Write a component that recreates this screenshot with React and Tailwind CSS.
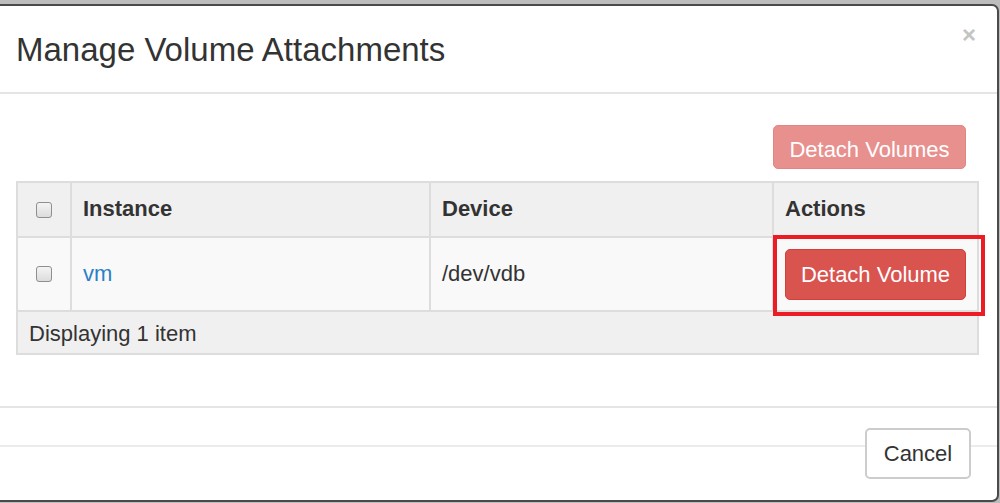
export default function App() {
  return (
    <div className="relative w-[1000px] h-[503px] bg-[#bdbdbd] overflow-hidden font-['Liberation_Sans',Arial,sans-serif] text-[#333]">
      <div className="mt-[4px] h-[498px] w-[999px] bg-white border-t-2 border-r-2 border-b-2 border-[#4a4a4a] rounded-tr-[7px] rounded-br-[7px] flex flex-col">
        {/* Header */}
        <div className="h-[88px] shrink-0 border-b-2 border-[#e5e5e5] flex items-start justify-between pl-[16px] pr-[21px]">
          <h4 className="mt-[24px] text-[33px] leading-[40px] text-[#333]">Manage Volume Attachments</h4>
          <span className="mt-[17px] text-[24px] leading-[24px] font-bold text-[#c4c4c4]">×</span>
        </div>

        {/* Body */}
        <div className="h-[312px] shrink-0 pl-[16px] pr-[20px] pt-[31px]">
          <div className="flex justify-end pr-[11px]">
            <button className="h-[44px] w-[193px] rounded-[5px] bg-[#e8908e] border border-[#e38583] text-white text-[22px] pt-[4px]">
              Detach Volumes
            </button>
          </div>
          <div className="mt-[12px] w-[963px] border-2 border-[#dddddd] text-[22px]">
            <div className="flex h-[55px] bg-[#f0f0f0] border-b-2 border-[#dddddd] font-bold text-[#333]">
              <div className="w-[54px] shrink-0 flex items-center justify-center border-r-2 border-[#dddddd]">
                <Checkbox />
              </div>
              <div className="w-[359px] shrink-0 border-r-2 border-[#dddddd] px-[11px] pt-[9px]">Instance</div>
              <div className="w-[343px] shrink-0 border-r-2 border-[#dddddd] px-[11px] pt-[9px]">Device</div>
              <div className="flex-1 px-[11px] pt-[9px]">Actions</div>
            </div>
            <div className="flex h-[74px] bg-[#f9f9f9] border-b-2 border-[#dddddd]">
              <div className="w-[54px] shrink-0 flex items-center justify-center border-r-2 border-[#dddddd]">
                <Checkbox />
              </div>
              <div className="w-[359px] shrink-0 border-r-2 border-[#dddddd] px-[11px] pt-[19px] text-[#2c7fc6]">vm</div>
              <div className="w-[343px] shrink-0 border-r-2 border-[#dddddd] px-[11px] pt-[19px]">/dev/vdb</div>
              <div className="flex-1 relative">
                <div className="absolute left-[-1px] top-[-3px] w-[212px] h-[81px] border-[4px] border-[#ed1c24]"></div>
                <button className="ml-[11px] mt-[11px] h-[51px] w-[181px] rounded-[5px] bg-[#d9534f] border border-[#d43f3a] text-white text-[22px]">
                  Detach Volume
                </button>
              </div>
            </div>
            <div className="h-[41px] bg-[#f0f0f0] px-[11px] pt-[5px]">Displaying 1 item</div>
          </div>
        </div>

        {/* Footer */}
        <div className="flex-1 border-t-2 border-[#e5e5e5] flex items-start pt-[20px]">
          <div className="flex-1 mt-[17px] h-[2px] bg-[#ececec]"></div>
          <button className="h-[51px] w-[106px] rounded-[5px] bg-white border-2 border-[#cccccc] text-[#333] text-[22px]">
            Cancel
          </button>
          <div className="w-[26px] mt-[17px] h-[2px] bg-[#ececec]"></div>
        </div>
      </div>
    </div>
  );
}

function Checkbox() {
  return (
    <span className="block w-[16px] h-[16px] rounded-[3px] border border-[#8f8f8f] bg-gradient-to-b from-[#f4f4f4] to-[#dcdcdc]"></span>
  );
}
